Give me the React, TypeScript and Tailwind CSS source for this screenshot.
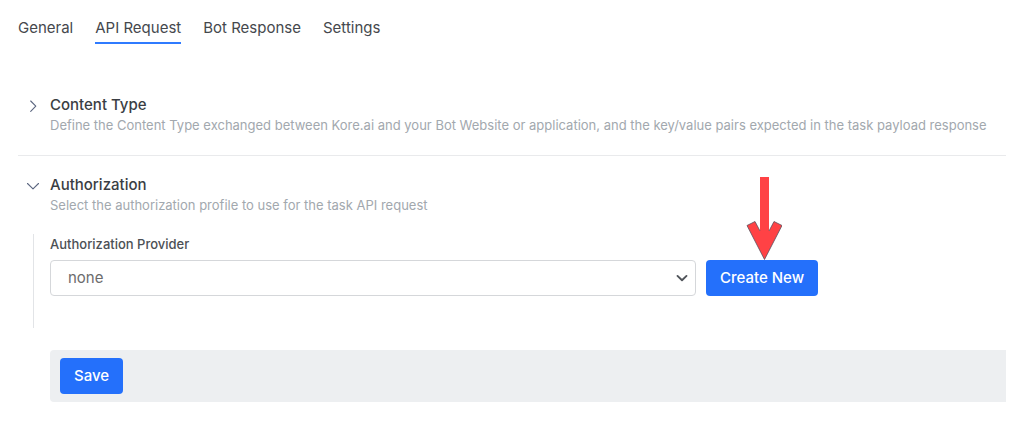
import { useState } from "react";

const tabs = ["General", "API Request", "Bot Response", "Settings"];

function Chevron({ open }: { open: boolean }) {
  return (
    <svg viewBox="0 0 14 14" className="mt-1 size-3.5 shrink-0" fill="none" stroke="#5c6780" strokeWidth="1.1" strokeLinecap="round" strokeLinejoin="round" aria-hidden="true">
      <path d={open ? "M1.5 4.5 7 9.900 12.5 4.5" : "M4.7 2 9.8 7.2 4.7 12.4"} />
    </svg>
  );
}

function SectionHeader({ title, text, open, onToggle }: { title: string; text: string; open: boolean; onToggle: () => void }) {
  return (
    <button type="button" aria-expanded={open} onClick={onToggle} className="flex w-full items-start gap-2.5 pl-2 text-left">
      <Chevron open={open} />
      <span className="block">
        <span className="block text-[15px] leading-5 font-medium text-[#3a3e43]">{title}</span>
        <span className="block text-[13px] leading-5 text-[#a2a8ae]">{text}</span>
      </span>
    </button>
  );
}

function PointerArrow() {
  return (
    <svg viewBox="0 0 36 84" className="pointer-events-none absolute bottom-full left-10 h-[84px] w-9" aria-hidden="true">
      <path d="M14 1h9v54l5-9.500 8 4L18.500 83.500 1 49.500l8-4 5 9.500z" fill="#ff4245" />
      <path d="M14 55l-5-9.500-8 4 17.500 34 17.500-34-8-4-5 9.500" fill="none" stroke="#5b5360" strokeWidth="0.8" />
    </svg>
  );
}

export default function App() {
  const [tab, setTab] = useState("API Request");
  const [contentOpen, setContentOpen] = useState(false);
  const [authOpen, setAuthOpen] = useState(true);

  return (
    <main className="bg-white px-[18px] pt-4 pb-6 font-['Inter',sans-serif]">
      <nav className="flex gap-[22px]">
        {tabs.map((name) => (
          <button
            key={name}
            type="button"
            aria-current={name === tab ? "page" : undefined}
            onClick={() => setTab(name)}
            className={`border-b-2 pb-0.5 text-[15px] leading-6 text-[#45484d] ${name === tab ? "border-[#2f7bff]" : "border-transparent"}`}
          >
            {name}
          </button>
        ))}
      </nav>

      <section className="mt-[50px] border-b border-[#e9eaec] pt-px pb-5">
        <SectionHeader
          title="Content Type"
          text="Define the Content Type exchanged between Kore.ai and your Bot Website or application, and the key/value pairs expected in the task payload response"
          open={contentOpen}
          onToggle={() => setContentOpen(!contentOpen)}
        />
      </section>

      <section className="pt-[19px]">
        <SectionHeader
          title="Authorization"
          text="Select the authorization profile to use for the task API request"
          open={authOpen}
          onToggle={() => setAuthOpen(!authOpen)}
        />
        {authOpen && (
          <div className="mt-[19px] ml-[15px] border-l border-[#e2e4e7] pb-8 pl-4">
            <label htmlFor="provider" className="block text-[13px] leading-5 font-medium text-[#4c5055]">
              Authorization Provider
            </label>
            <div className="mt-1.5 flex gap-2.5">
              <div className="relative max-w-[646px] flex-1">
                <select id="provider" className="h-9 w-full appearance-none rounded border border-[#d5d7da] bg-white px-[17px] text-[15px] text-[#6c6c6c]">
                  <option>none</option>
                </select>
                <svg viewBox="0 0 12 8" className="pointer-events-none absolute top-3.5 right-2 h-2 w-3" fill="none" stroke="#50545a" strokeWidth="1.900" strokeLinecap="round" strokeLinejoin="round" aria-hidden="true">
                  <path d="M1.500 1.900 6 6.200l4.500-4.300" />
                </svg>
              </div>
              <div className="relative">
                <button type="button" className="h-9 rounded bg-[#2470fb] px-3.5 text-[15px] font-medium text-white">
                  Create New
                </button>
                <PointerArrow />
              </div>
            </div>
          </div>
        )}
      </section>

      <footer className="mt-[22px] ml-8 rounded-l bg-[#edeff1] px-2.5 py-2">
        <button type="button" className="h-9 rounded bg-[#2470fb] px-3.5 text-[15px] font-medium text-white">
          Save
        </button>
      </footer>
    </main>
  );
}
